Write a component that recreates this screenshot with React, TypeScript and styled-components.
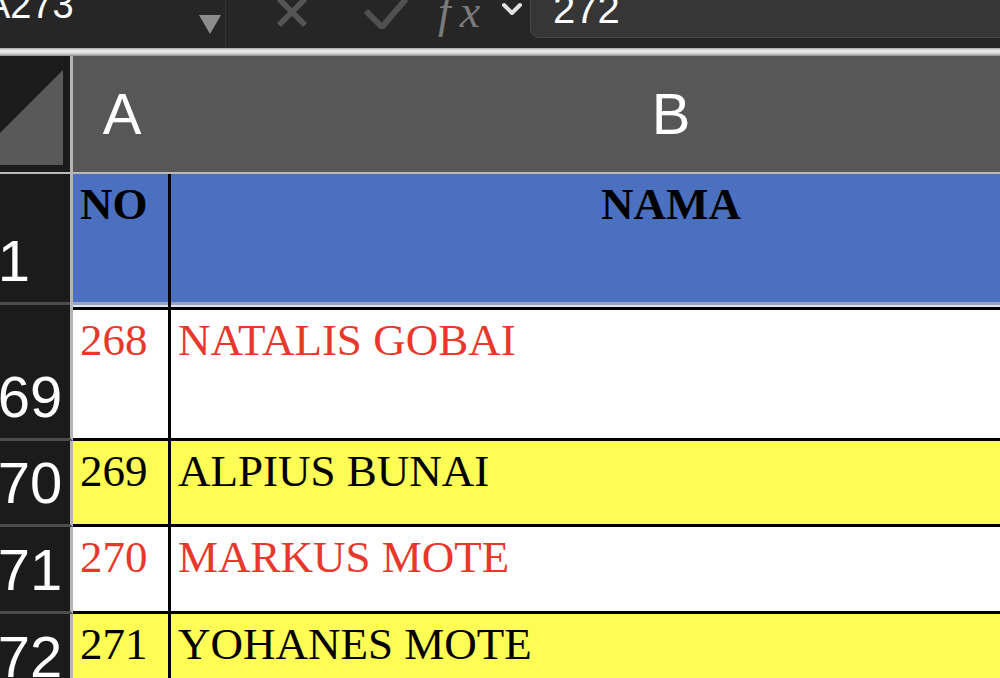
import React from 'react';
import styled, { createGlobalStyle } from 'styled-components';

const GlobalStyle = createGlobalStyle`
    html,
    body {
        margin: 0;
        padding: 0;
        background: #262626;
    }
`;

const Window = styled.div`
    width: 1000px;
    height: 678px;
    overflow: hidden;
    background: #262626;
`;

// the sheet is scrolled a little: row headers and name box are cut on the left
const Viewport = styled.div`
    width: 1400px;
    margin-left: -42px;
`;

const Toolbar = styled.div`
    display: flex;
    align-items: flex-start;
    height: 78px;
    margin-top: -30px;
    background: #262626;
`;

const NameBox = styled.div`
    display: flex;
    align-items: flex-start;
    flex: none;
    width: 268px;
    height: 100%;
    box-sizing: border-box;
    padding: 16px 4px 0 27px;
    border-right: 1px solid #343434;
`;

const NameText = styled.span`
    font: 38px/1 'Liberation Sans', Arial, sans-serif;
    color: #fff;
`;

const DropArrow = styled.svg`
    margin: 29px 0 0 auto;
`;

const Icon = styled.svg<{ $left: number; $top: number }>`
    flex: none;
    margin-left: ${(p) => p.$left}px;
    margin-top: ${(p) => p.$top}px;
`;

const Fx = styled.span`
    flex: none;
    width: 56px;
    margin: 19px 0 0 30px;
    font: italic 46px/1 'Liberation Serif', 'Times New Roman', serif;
    letter-spacing: 9px;
    color: #7a7a7a;
`;

const FormulaInput = styled.div`
    flex: 1;
    height: 68px;
    margin-left: 6px;
    box-sizing: border-box;
    padding: 18px 0 0 22px;
    background: #363636;
    border: 1px solid #474747;
    border-radius: 0 0 0 9px;
    font: 40px/1 'Liberation Sans', Arial, sans-serif;
    color: #fff;
`;

const Band = styled.div`
    height: 8px;
    background: linear-gradient(#a8a8a8, #efefef 35%, #dcdcdc 65%, #8e8e8e);
`;

const Sheet = styled.div`
    display: grid;
    grid-template-columns: 115px 98px 1000px;
    grid-template-rows: 118px 136px 131px 86px 87px 87px;
    background: #1b1b1b;
`;

const Corner = styled.div`
    display: flex;
    align-items: flex-end;
    justify-content: flex-end;
    padding: 0 7px 7px 0;
    background: #1b1b1b;
    border-right: 3px solid #b4b4b4;
    border-bottom: 2px solid #b9b9b9;
`;

const ColHead = styled.div`
    display: flex;
    align-items: center;
    justify-content: center;
    background: #575757;
    border-bottom: 2px solid #b9b9b9;
    font: 58px/1 'Liberation Sans', Arial, sans-serif;
    color: #fff;
`;

const RowHead = styled.div<{ $lead?: boolean }>`
    display: flex;
    align-items: flex-end;
    justify-content: center;
    padding-bottom: ${(p) => (p.$lead ? 20 : 12)}px;
    background: #1b1b1b;
    border-right: 3px solid #b4b4b4;
    border-bottom: ${(p) => (p.$lead ? 'none' : '3px solid #4d4d4d')};
    box-shadow: ${(p) => (p.$lead ? 'inset 0 -5px 0 #1b1b1b, inset 0 -8px 0 #4d4d4d' : 'none')};
    font: 58px/1 'Liberation Sans', Arial, sans-serif;
    color: #fff;
    white-space: nowrap;
`;

const TitleCell = styled.div<{ $center?: boolean; $divider?: boolean }>`
    padding: 8px 7px 0;
    text-align: ${(p) => (p.$center ? 'center' : 'left')};
    background: #4a70bf;
    border-right: ${(p) => (p.$divider ? '3px solid #000' : 'none')};
    box-shadow: inset 0 -3px 0 #000, inset 0 -5px 0 #e1e5ef, inset 0 -8px 0 #97a3c1;
    font: bold 45px/1 'Liberation Serif', 'Times New Roman', serif;
    color: #000;
    white-space: nowrap;
`;

const Cell = styled.div<{ $fill: string; $tone: string; $divider?: boolean }>`
    padding: 8px 8px 0 7px;
    background: ${(p) => p.$fill};
    color: ${(p) => p.$tone};
    border-right: ${(p) => (p.$divider ? '3px solid #000' : 'none')};
    border-bottom: 3px solid #000;
    font: 45px/1 'Liberation Serif', 'Times New Roman', serif;
    white-space: nowrap;
`;

const RED = '#e8382c';
const YELLOW = '#fefd55';

const rows = [
    { n: '269', no: '268', name: 'NATALIS GOBAI', yellow: false },
    { n: '270', no: '269', name: 'ALPIUS BUNAI', yellow: true },
    { n: '271', no: '270', name: 'MARKUS MOTE', yellow: false },
    { n: '272', no: '271', name: 'YOHANES MOTE', yellow: true },
];

const App = () => (
    <Window>
        <GlobalStyle />
        <Viewport>
            <Toolbar>
                <NameBox>
                    <NameText>A273</NameText>
                    <DropArrow width="22" height="19" viewBox="0 0 22 19">
                        <polygon points="0,0 22,0 11,19" fill="#8c8c8c" />
                    </DropArrow>
                </NameBox>
                <Icon $left={50} $top={26} width="32" height="32" viewBox="0 0 32 32">
                    <path d="M3 3 L29 29 M29 3 L3 29" stroke="#545454" strokeWidth="5.5" fill="none" />
                </Icon>
                <Icon $left={56} $top={27} width="44" height="32" viewBox="0 0 44 32">
                    <polyline points="2,14 18,30 42,2" stroke="#505050" strokeWidth="6" fill="none" />
                </Icon>
                <Fx>fx</Fx>
                <Icon $left={6} $top={32} width="24" height="16" viewBox="0 0 24 16">
                    <polyline
                        points="4,3 12,11 20,3"
                        stroke="#e2e2e2"
                        strokeWidth="4"
                        strokeLinecap="round"
                        strokeLinejoin="round"
                        fill="none"
                    />
                </Icon>
                <FormulaInput>272</FormulaInput>
            </Toolbar>
            <Band />
            <Sheet>
                <Corner>
                    <svg width="95" height="95" viewBox="0 0 95 95">
                        <polygon points="0,95 95,95 95,0" fill="#595959" />
                    </svg>
                </Corner>
                <ColHead>A</ColHead>
                <ColHead>B</ColHead>

                <RowHead $lead>1</RowHead>
                <TitleCell $divider>NO</TitleCell>
                <TitleCell $center>NAMA</TitleCell>

                {rows.map((r) => {
                    const fill = r.yellow ? YELLOW : '#fff';
                    const tone = r.yellow ? '#000' : RED;
                    return (
                        <React.Fragment key={r.n}>
                            <RowHead>{r.n}</RowHead>
                            <Cell $fill={fill} $tone={tone} $divider>
                                {r.no}
                            </Cell>
                            <Cell $fill={fill} $tone={tone}>
                                {r.name}
                            </Cell>
                        </React.Fragment>
                    );
                })}
            </Sheet>
        </Viewport>
    </Window>
);

export default App;
